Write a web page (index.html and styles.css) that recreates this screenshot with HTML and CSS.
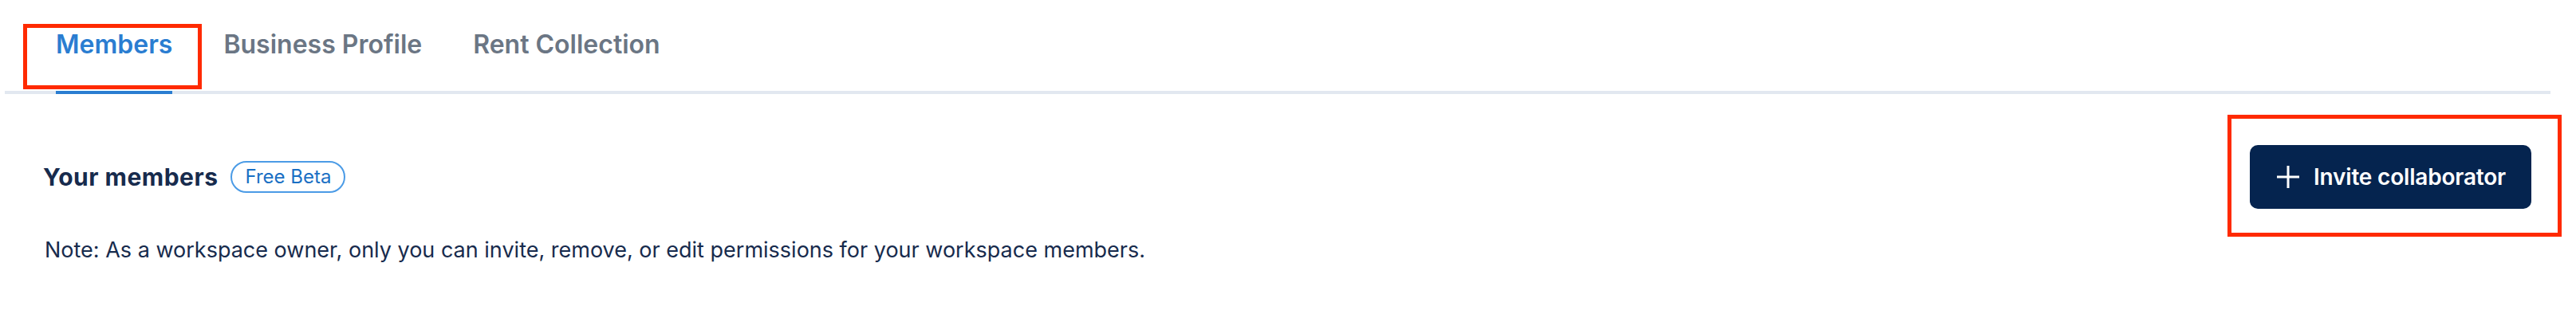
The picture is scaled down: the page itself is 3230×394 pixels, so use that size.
FILE: index.html
```html
<!DOCTYPE html>
<html lang="en">
<head>
<meta charset="utf-8">
<title>Members</title>
<link rel="stylesheet" href="styles.css">
</head>
<body>
<div class="page">
  <nav class="tabs">
    <a class="tab active">Members</a>
    <a class="tab">Business Profile</a>
    <a class="tab">Rent Collection</a>
  </nav>
  <section class="members">
    <div class="members-head">
      <div class="title-group">
        <h2 class="title">Your members</h2>
        <span class="badge">Free Beta</span>
      </div>
      <button class="invite-btn" type="button">
        <svg class="plus" width="32" height="32" viewBox="0 0 32 32" aria-hidden="true">
          <path d="M16 2v28M2 16h28" stroke="#ffffff" stroke-width="3" fill="none"/>
        </svg>
        <span>Invite collaborator</span>
      </button>
    </div>
    <p class="note">Note: As a workspace owner, only you can invite, remove, or edit permissions for your workspace members.</p>
  </section>
  <div class="mark mark-tab"></div>
  <div class="mark mark-btn"></div>
</div>
</body>
</html>
```
FILE: styles.css
```css
* { box-sizing: border-box; }
html, body { margin: 0; padding: 0; background: #ffffff; }
body { font-family: Inter, "Noto Sans", sans-serif; color: #172b4d; }

.page { position: relative; width: 3230px; height: 394px; }

.tabs {
  display: flex;
  gap: 64px;
  margin: 0 32px 0 6px;
  padding: 36px 0 0 64px;
  border-bottom: 4px solid #e2e8f0;
}
.tab {
  display: block;
  font-size: 32px;
  line-height: 40px;
  font-weight: 600;
  color: #6b7684;
  padding-bottom: 38px;
  border-bottom: 4px solid transparent;
  margin-bottom: -4px;
  cursor: pointer;
}
.tab.active { color: #2a7dd1; border-bottom-color: #2a7dd1; }

.members { padding: 64px 56px 0 54px; }
.members-head {
  display: flex;
  align-items: center;
  justify-content: space-between;
  height: 80px;
}
.title-group { display: flex; align-items: center; gap: 16px; }
.title {
  margin: 0;
  font-size: 30px;
  line-height: 40px;
  font-weight: 700;
  letter-spacing: 0.5px;
  color: #172b4d;
}
.badge {
  display: inline-flex;
  align-items: center;
  height: 40px;
  padding: 0 16px;
  border: 2px solid #4b9be6;
  border-radius: 999px;
  font-size: 24px;
  line-height: 36px;
  color: #1a6fc4;
}
.invite-btn {
  display: flex;
  align-items: center;
  gap: 16px;
  height: 80px;
  padding: 0 32px;
  border: 0;
  border-radius: 10px;
  background: #05244f;
  color: #ffffff;
  font-family: Inter, "Noto Sans", sans-serif;
  font-size: 28px;
  font-weight: 600;
  letter-spacing: -0.2px;
  line-height: 40px;
  cursor: pointer;
}
.plus { display: block; flex: none; }

.note {
  margin: 32px 0 0 2px;
  font-size: 27px;
  line-height: 40px;
  color: #172b4d;
}

.mark {
  position: absolute;
  border: 5px solid #ff2a00;
  pointer-events: none;
}
.mark-tab { left: 29px; top: 30px; width: 224px; height: 82px; }
.mark-btn { left: 2793px; top: 144px; width: 419px; height: 153px; }
```
